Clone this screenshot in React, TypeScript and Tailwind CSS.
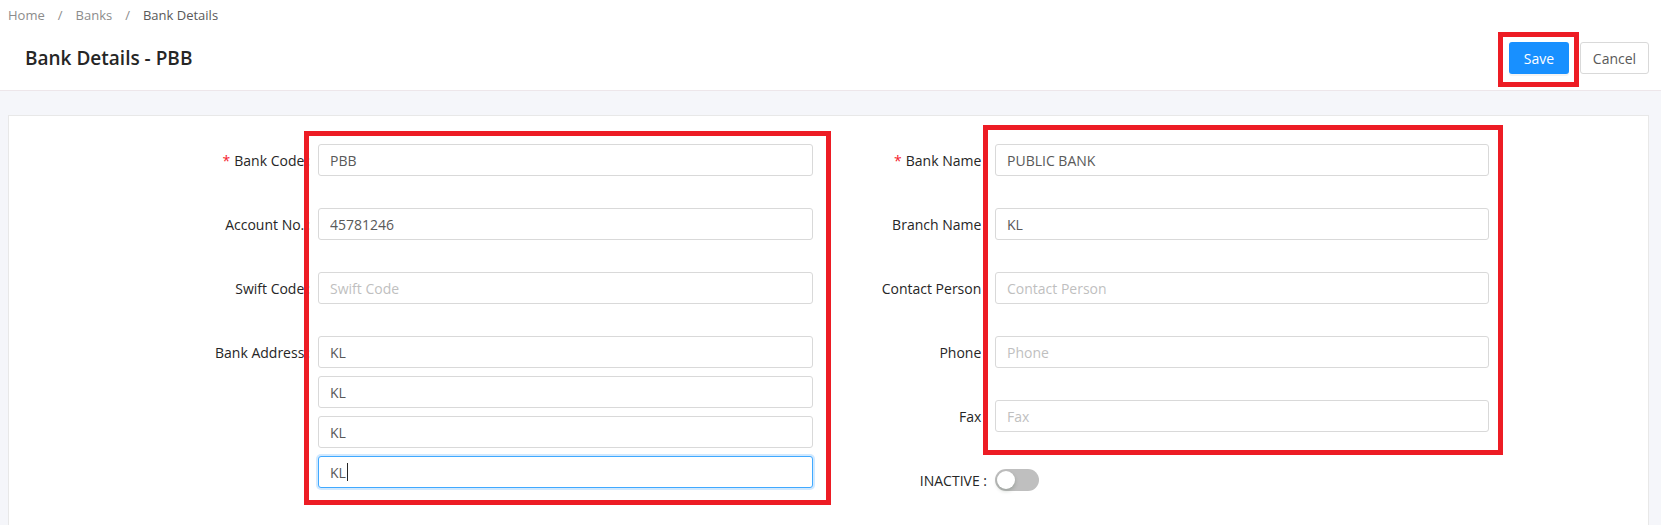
import React from "react";

const font = { fontFamily: '"Open Sans", "Noto Sans", Arial, sans-serif' };

function Label({ text, required, width }: { text: string; required?: boolean; width: string }) {
  return (
    <div className={`${width} flex shrink-0 items-center justify-end text-[14px] text-[#262626]`}>
      {required && <span className="mr-1 text-[14px] text-[#f5222d]">*</span>}
      <span>{text}</span>
      <span className="ml-[2px] mr-2">:</span>
    </div>
  );
}

function TextInput({ value, placeholder, width }: { value?: string; placeholder?: string; width: string }) {
  return (
    <input
      readOnly
      defaultValue={value}
      placeholder={placeholder}
      className={`${width} h-8 rounded-[3px] border border-[#d9d9d9] bg-white px-[11px] text-[14px] text-[#595959] outline-none placeholder:text-[#bfbfbf]`}
    />
  );
}

function FocusedInput({ value, width }: { value: string; width: string }) {
  return (
    <div
      className={`${width} flex h-8 items-center rounded-[3px] border border-[#40a9ff] bg-white px-[11px] text-[14px] text-[#595959] shadow-[0_0_0_2px_rgba(24,144,255,0.2)]`}
    >
      <span>{value}</span>
      <span className="ml-[1px] inline-block h-[18px] w-px bg-[#262626]" />
    </div>
  );
}

function Row({ children, className = "" }: { children: React.ReactNode; className?: string }) {
  return <div className={`flex items-center ${className}`}>{children}</div>;
}

export default function App() {
  return (
    <div className="relative h-[525px] w-[1661px] overflow-hidden bg-[#f5f6fa]" style={font}>
      {/* header */}
      <div className="border-b border-[#ede6ea] bg-white px-2 pt-[5px] pb-4 pr-3">
        <div className="flex h-[22px] items-center text-[13px]">
          <span className="text-[#8c8c8c]">Home</span>
          <span className="mx-[13px] text-[#8c8c8c]">/</span>
          <span className="text-[#8c8c8c]">Banks</span>
          <span className="mx-[13px] text-[#8c8c8c]">/</span>
          <span className="text-[#595959]">Bank Details</span>
        </div>
        <div className="mt-[15px] flex h-8 items-center justify-between">
          <h1 className="pl-[17px] text-[19px] font-semibold text-[#262626]">Bank Details - PBB</h1>
          <div className="flex items-center gap-[11px]">
            <button className="h-8 w-[60px] rounded-[3px] bg-[#1890ff] text-[14px] text-white shadow-[0_2px_0_rgba(0,0,0,0.045)]">
              Save
            </button>
            <button className="h-8 w-[69px] rounded-[3px] border border-[#d9d9d9] bg-white text-[14px] text-[#595959]">
              Cancel
            </button>
          </div>
        </div>
      </div>

      {/* card */}
      <div className="ml-2 mr-3 mt-6 h-[460px] border border-[#e8e8e8] bg-white pt-[28px]">
        <div className="flex">
          {/* left column */}
          <div className="flex flex-col">
            <Row>
              <Label text="Bank Code" required width="w-[309px]" />
              <TextInput value="PBB" width="w-[495px]" />
            </Row>
            <Row className="mt-8">
              <Label text="Account No." width="w-[309px]" />
              <TextInput value="45781246" width="w-[495px]" />
            </Row>
            <Row className="mt-8">
              <Label text="Swift Code" width="w-[309px]" />
              <TextInput placeholder="Swift Code" width="w-[495px]" />
            </Row>
            <div className="mt-8 flex">
              <div className="flex h-8 items-center">
                <Label text="Bank Address" width="w-[309px]" />
              </div>
              <div className="flex flex-col gap-2">
                <TextInput value="KL" width="w-[495px]" />
                <TextInput value="KL" width="w-[495px]" />
                <TextInput value="KL" width="w-[495px]" />
                <FocusedInput value="KL" width="w-[495px]" />
              </div>
            </div>
          </div>

          {/* right column */}
          <div className="flex flex-col">
            <Row>
              <Label text="Bank Name" required width="w-[182px]" />
              <TextInput value="PUBLIC BANK" width="w-[494px]" />
            </Row>
            <Row className="mt-8">
              <Label text="Branch Name" width="w-[182px]" />
              <TextInput value="KL" width="w-[494px]" />
            </Row>
            <Row className="mt-8">
              <Label text="Contact Person" width="w-[182px]" />
              <TextInput placeholder="Contact Person" width="w-[494px]" />
            </Row>
            <Row className="mt-8">
              <Label text="Phone" width="w-[182px]" />
              <TextInput placeholder="Phone" width="w-[494px]" />
            </Row>
            <Row className="mt-8">
              <Label text="Fax" width="w-[182px]" />
              <TextInput placeholder="Fax" width="w-[494px]" />
            </Row>
            <Row className="mt-8 h-8">
              <div className="flex w-[182px] justify-end pr-2 text-[14px] text-[#262626]">INACTIVE :</div>
              <div className="relative h-[22px] w-[44px] rounded-full bg-[#bfbfbf]">
                <span className="absolute left-[2px] top-[2px] h-[18px] w-[18px] rounded-full bg-white shadow-[0_2px_4px_rgba(0,35,11,0.2)]" />
              </div>
            </Row>
          </div>
        </div>
      </div>

      {/* annotation boxes */}
      <div className="pointer-events-none absolute left-[1498px] top-[32px] h-[55px] w-[81px] border-[5px] border-[#ed1c24]" />
      <div className="pointer-events-none absolute left-[304px] top-[131px] h-[374px] w-[527px] border-[5px] border-[#ed1c24]" />
      <div className="pointer-events-none absolute left-[983px] top-[125px] h-[330px] w-[520px] border-[5px] border-[#ed1c24]" />
    </div>
  );
}
